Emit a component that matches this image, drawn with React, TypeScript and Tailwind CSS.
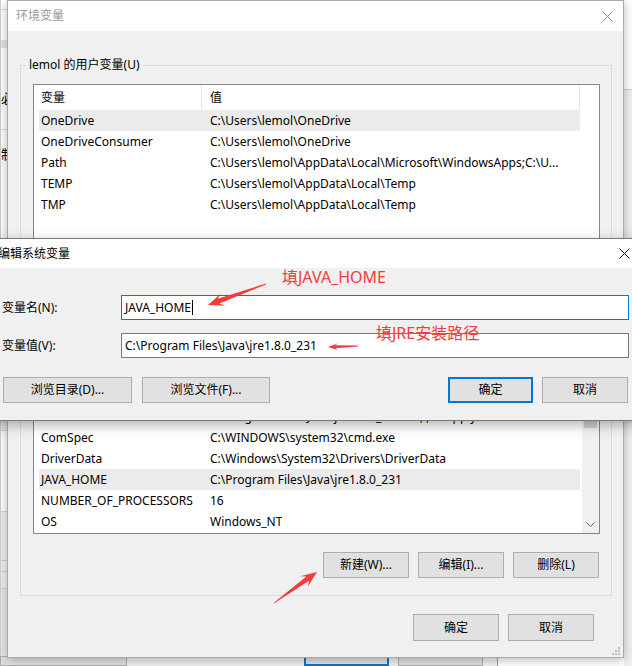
import React from "react";

type Row = { name: string; value: string };

const userRows: Row[] = [
	{ name: "OneDrive", value: "C:\\Users\\lemol\\OneDrive" },
	{ name: "OneDriveConsumer", value: "C:\\Users\\lemol\\OneDrive" },
	{
		name: "Path",
		value: "C:\\Users\\lemol\\AppData\\Local\\Microsoft\\WindowsApps;C:\\U...",
	},
	{ name: "TEMP", value: "C:\\Users\\lemol\\AppData\\Local\\Temp" },
	{ name: "TMP", value: "C:\\Users\\lemol\\AppData\\Local\\Temp" },
];

// the first row sits almost fully under the edit dialog, only descenders show
const systemRows: Row[] = [
	{ name: "CLASSPATH", value: "C:\\Program Files\\Java\\jre1.8.0_231\\lib;.;C:\\Apply" },
	{ name: "ComSpec", value: "C:\\WINDOWS\\system32\\cmd.exe" },
	{ name: "DriverData", value: "C:\\Windows\\System32\\Drivers\\DriverData" },
	{ name: "JAVA_HOME", value: "C:\\Program Files\\Java\\jre1.8.0_231" },
	{ name: "NUMBER_OF_PROCESSORS", value: "16" },
	{ name: "OS", value: "Windows_NT" },
];

const CloseIcon = ({ color }: { color: string }) => (
	<svg width="11" height="11" viewBox="0 0 11 11" className="shrink-0">
		<path d="M0.5 0.5 L10.5 10.5 M10.5 0.5 L0.5 10.5" stroke={color} strokeWidth="1" />
	</svg>
);

const Button = ({
	label,
	className = "",
	primary = false,
}: {
	label: string;
	className?: string;
	primary?: boolean;
}) => (
	<div
		className={`flex shrink-0 items-center justify-center bg-[#e1e1e1] text-[12px] text-black ${
			primary ? "border-2 border-[#0078d7]" : "border border-[#adadad]"
		} ${className}`}
	>
		{label}
	</div>
);

const ListRows = ({ rows, selected }: { rows: Row[]; selected: number }) => (
	<>
		{rows.map((row, i) => (
			<div
				key={row.name}
				className={`flex h-[21px] shrink-0 items-center whitespace-nowrap text-[12px] text-black ${
					i === selected ? "bg-[#ebebeb]" : ""
				}`}
			>
				<span className="w-[171px] shrink-0 overflow-hidden pl-[2px]">{row.name}</span>
				<span className="overflow-hidden">{row.value}</span>
			</div>
		))}
	</>
);

const Arrow = ({
	from,
	to,
	head,
	width,
	shaft,
}: {
	from: [number, number];
	to: [number, number];
	head: number;
	width: number;
	shaft: number;
}) => {
	const [x1, y1] = from;
	const [x2, y2] = to;
	const len = Math.hypot(x2 - x1, y2 - y1);
	const ux = (x2 - x1) / len;
	const uy = (y2 - y1) / len;
	const nx = -uy;
	const ny = ux;
	const at = (d: number, w: number) =>
		`${x2 - ux * d + nx * w},${y2 - uy * d + ny * w}`;
	const points = [
		`${x1 + nx * 0.4},${y1 + ny * 0.4}`,
		at(head * 0.8, shaft / 2),
		at(head * 1.15, width / 2),
		`${x2},${y2}`,
		at(head * 1.15, -width / 2),
		at(head * 0.8, -shaft / 2),
		`${x1 - nx * 0.4},${y1 - ny * 0.4}`,
	].join(" ");
	return <polygon points={points} fill="#f23d3d" />;
};

const BackgroundWindow = () => (
	<div className="absolute inset-0 flex bg-white">
		{/* sliver of the system properties window on the left */}
		<div className="flex w-[7px] flex-col overflow-hidden border-l border-[#cfcfcf]">
			<div className="h-[10px] border-b border-[#dcdcdc] bg-white" />
			<div className="h-[30px] bg-white" />
			<div className="h-[8px] bg-[#e4e4e4]" />
			<div className="flex h-[82px] flex-col items-end border-b border-[#dcdcdc] bg-white pt-[44px]">
				<span className="mr-[-7px] text-[13px] leading-[13px] text-black">必</span>
			</div>
			<div className="flex h-[50px] flex-col items-end bg-white pt-[18px]">
				<span className="mr-[-7px] text-[13px] leading-[13px] text-black">制</span>
			</div>
			<div className="h-[195px] bg-white" />
			<div className="h-[56px] border-b border-[#d6d6d6] bg-[#f0f0f0]" />
			<div className="h-[81px] border-b border-[#d6d6d6] bg-white" />
			<div className="h-[49px] border-b border-[#cfcfcf] bg-[#f0f0f0]" />
			<div className="h-[11px] border-b border-[#cfcfcf] bg-[#f0f0f0]" />
			<div className="h-[17px] border-b border-[#cfcfcf] bg-[#f0f0f0]" />
			<div className="flex-1 bg-[#e8e8e8]" />
		</div>
		<div className="flex flex-1 flex-col">
			<div className="flex-1" />
			<div className="flex h-[10px] bg-[#f0f0f0]">
				<div className="ml-[-7px] w-[127px] border border-[#adadad] bg-[#e1e1e1]" />
				<div className="ml-[177px] w-[85px] border-2 border-[#0078d7] bg-[#e1e1e1]" />
				<div className="ml-[9px] w-[85px] border border-[#adadad] bg-[#e1e1e1]" />
				<div className="ml-[14px] w-px bg-[#9a9a9a]" />
				<div className="flex-1 bg-white" />
			</div>
		</div>
		<div className="flex w-[8px] flex-col">
			<div className="h-[90px] border-b border-[#d0d0d0] bg-white" />
			<div className="flex-1 bg-[#f0f0f0]" />
		</div>
	</div>
);

const EnvDialog = () => (
	<div className="absolute left-[7px] top-0 flex h-[658px] w-[617px] flex-col border border-[#aaaaaa] bg-[#f0f0f0] shadow-[0_2px_10px_rgba(0,0,0,0.28)]">
		<div className="flex h-[30px] shrink-0 items-center justify-between bg-white pl-[8px] pr-[10px]">
			<span className="text-[12px] text-[#9a9a9a]">环境变量</span>
			<CloseIcon color="#8a8a8a" />
		</div>
		<div className="relative flex flex-1 flex-col pl-[12px] pr-[11px] pt-[26px]">
			<fieldset className="h-[235px] border border-[#dcdcdc]">
				<legend className="ml-[5px] px-[3px] text-[12px] leading-[16px] text-black">
					lemol 的用户变量(U)
				</legend>
				<div className="ml-[12px] mt-[11px] flex h-[186px] w-[567px] border border-[#828790] bg-white">
					<div className="w-[5px] shrink-0" />
					<div className="flex w-[541px] flex-col">
						<div className="flex h-[25px] shrink-0 items-center border-r border-[#e5e5e5] text-[12px] text-black">
							<span className="flex h-full w-[163px] items-center border-r border-[#e5e5e5] pl-[2px]">
								变量
							</span>
							<span className="pl-[8px]">值</span>
						</div>
						<ListRows rows={userRows} selected={0} />
					</div>
				</div>
			</fieldset>
			{/* system variables group: its caption lies under the edit dialog */}
			<fieldset className="flex h-[304px] flex-col border border-[#dcdcdc]">
				<legend className="ml-[5px] h-[16px] w-[70px]" />
				<div className="ml-[12px] mt-[12px] flex h-[214px] w-[567px] border border-[#828790] bg-white">
					<div className="w-[5px] shrink-0" />
					<div className="flex w-[541px] flex-col justify-end overflow-hidden pb-[1px]">
						<ListRows rows={systemRows} selected={3} />
					</div>
					<div className="w-[2px] shrink-0" />
					<div className="flex w-[17px] shrink-0 flex-col bg-[#f0f0f0]">
						<div className="h-[17px]" />
						<div className="mx-[2px] h-[90px] bg-[#cdcdcd]" />
						<div className="flex-1" />
						<div className="flex h-[17px] items-center justify-center">
							<svg width="9" height="6" viewBox="0 0 9 6">
								<path d="M0.5 0.5 L4.5 4.5 L8.5 0.5" stroke="#606060" fill="none" strokeWidth="1" />
							</svg>
						</div>
					</div>
				</div>
				<div className="mt-[18px] flex justify-end gap-[9px] pr-[12px]">
					<Button label="新建(W)..." className="h-[26px] w-[86px]" />
					<Button label="编辑(I)..." className="h-[26px] w-[86px]" />
					<Button label="删除(L)" className="h-[26px] w-[86px]" />
				</div>
			</fieldset>
			<div className="mt-[18px] flex justify-end gap-[9px] pr-[18px]">
				<Button label="确定" className="h-[27px] w-[86px]" />
				<Button label="取消" className="h-[27px] w-[86px]" />
			</div>
			<svg width="9" height="9" viewBox="0 0 9 9" className="absolute bottom-[1px] right-[2px]">
				{[
					[7, 1],
					[7, 4],
					[4, 4],
					[7, 7],
					[4, 7],
					[1, 7],
				].map(([x, y]) => (
					<rect key={`${x}-${y}`} x={x - 1} y={y - 1} width="2" height="2" fill="#bdbdbd" />
				))}
			</svg>
		</div>
	</div>
);

const EditDialog = () => (
	<div className="absolute left-[-8px] top-[238px] flex h-[183px] w-[650px] flex-col border border-[#7a7a7a] bg-[#f0f0f0] shadow-[0_4px_12px_rgba(0,0,0,0.3)]">
		<div className="flex h-[29px] shrink-0 items-center justify-between bg-white pl-[5px] pr-[11px]">
			<span className="text-[12px] text-black">编辑系统变量</span>
			<CloseIcon color="#111111" />
		</div>
		<div className="flex flex-col pl-[9px] pr-[12px] pt-[27px] text-[12px] text-black">
			<div className="flex items-center">
				<span className="w-[119px] shrink-0">变量名(N):</span>
				<div className="flex h-[25px] flex-1 items-center border border-[#0078d7] bg-white px-[3px]">
					JAVA_HOME
					<span className="ml-[1px] inline-block h-[15px] w-px bg-black" />
				</div>
			</div>
			<div className="mt-[13px] flex items-center">
				<span className="w-[119px] shrink-0">变量值(V):</span>
				<div className="flex h-[25px] flex-1 items-center border border-[#7a7a7a] bg-white px-[3px]">
					C:\Program Files\Java\jre1.8.0_231
				</div>
			</div>
			<div className="mt-[19px] flex items-center pl-[1px] pr-[1px]">
				<Button label="浏览目录(D)..." className="h-[26px] w-[129px]" />
				<Button label="浏览文件(F)..." className="ml-[10px] h-[26px] w-[128px]" />
				<div className="flex-1" />
				<Button label="确定" primary className="h-[26px] w-[85px]" />
				<Button label="取消" className="ml-[9px] h-[26px] w-[86px]" />
			</div>
		</div>
	</div>
);

const Annotations = () => (
	<>
		<span className="absolute left-[282px] top-[266px] text-[16px] leading-[22px] text-[#f23d3d]">
			填JAVA_HOME
		</span>
		<span className="absolute left-[376px] top-[322px] text-[16px] leading-[22px] text-[#f23d3d]">
			填JRE安装路径
		</span>
		<svg className="pointer-events-none absolute inset-0" width="632" height="666">
			<Arrow from={[266, 284]} to={[208, 305]} head={14} width={13} shaft={5} />
			<Arrow from={[358, 346]} to={[328, 347]} head={9} width={7} shaft={3} />
			<Arrow from={[274, 603]} to={[317, 572]} head={14} width={13} shaft={5} />
		</svg>
	</>
);

export default function App() {
	return (
		<div className="relative h-[666px] w-[632px] overflow-hidden bg-white font-['Noto_Sans','Noto_Sans_CJK_SC',sans-serif]">
			<BackgroundWindow />
			<EnvDialog />
			<EditDialog />
			<Annotations />
		</div>
	);
}
